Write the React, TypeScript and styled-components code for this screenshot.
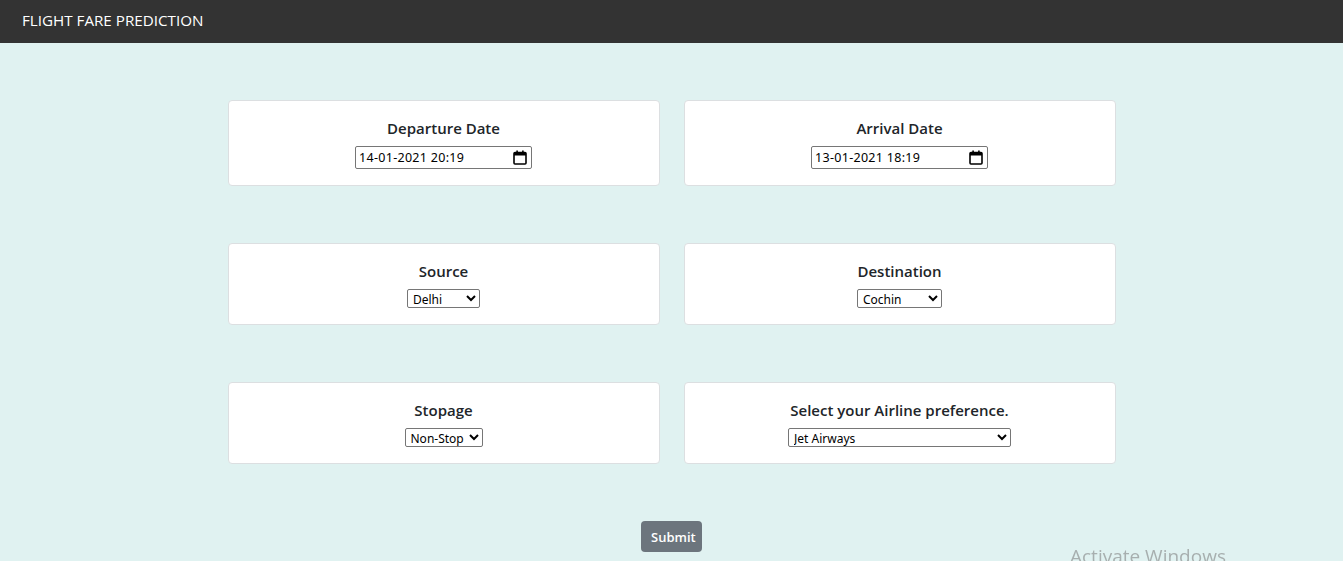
import React from "react";
import styled, { createGlobalStyle } from "styled-components";

const Global = createGlobalStyle`
  html, body { margin: 0; padding: 0; }
  body {
    background: #e0f2f1;
    font-family: "Open Sans", "Noto Sans", Arial, sans-serif;
    color: #212529;
    overflow: hidden;
  }
`;

const Page = styled.div`
  min-height: 561px;
  background: #e0f2f1;
`;

const NavBar = styled.header`
  height: 43px;
  background: #333333;
  display: flex;
  align-items: center;
  padding: 0 22px 3px;
  box-sizing: border-box;
`;

const Brand = styled.span`
  color: #ffffff;
  font-size: 15.2px;
`;

const Main = styled.main`
  display: flex;
  flex-direction: column;
  align-items: center;
  padding-top: 57px;
  gap: 57px;
`;

const Grid = styled.div`
  display: grid;
  grid-template-columns: 432px 432px;
  column-gap: 24px;
  row-gap: 57px;
`;

const Card = styled.section`
  background: #ffffff;
  border: 1px solid #dcdfe1;
  border-radius: 4px;
  padding: 16px;
  display: flex;
  flex-direction: column;
  align-items: center;
  gap: 7px;
`;

const Title = styled.h2`
  margin: 0;
  font-size: 15px;
  font-weight: 600;
  line-height: 22px;
  color: #212529;
`;

const DateBox = styled.div`
  width: 177px;
  height: 23px;
  box-sizing: border-box;
  border: 1px solid #767676;
  border-radius: 2px;
  display: flex;
  align-items: center;
  justify-content: space-between;
  padding: 0 4px 0 3px;
  font-family: "Noto Sans", Arial, sans-serif;
  font-size: 12.5px;
  letter-spacing: 0.3px;
  color: #000;
  background: #fff;
`;

const Select = styled.select<{ $w: number }>`
  width: ${(p) => p.$w}px;
  height: 19px;
  font-family: "Noto Sans", Arial, sans-serif;
  font-size: 12px;
  color: #000;
  border: 1px solid #767676;
  border-radius: 2px;
  background: #fff;
  padding: 0 0 0 1px;
`;

const Submit = styled.button`
  background: #6c757d;
  color: #fff;
  border: none;
  border-radius: 4px;
  font-family: "Open Sans", Arial, sans-serif;
  font-size: 13px;
  font-weight: 600;
  height: 31px;
  padding: 0 10px;
  width: 61px;
  cursor: pointer;
`;

const Watermark = styled.div`
  position: fixed;
  left: 1070px;
  top: 543px;
  font-family: "Open Sans", Arial, sans-serif;
  font-size: 19px;
  color: rgba(120, 120, 120, 0.55);
  white-space: nowrap;
  pointer-events: none;
`;

const CalendarIcon = () => (
  <svg width="14" height="15" viewBox="0 0 14 15" aria-hidden>
    <rect x="1" y="2.5" width="12" height="11.5" rx="1" fill="none" stroke="#000" strokeWidth="1.6" />
    <rect x="1" y="2.5" width="12" height="3" fill="#000" />
    <rect x="3.3" y="0.5" width="1.6" height="3" fill="#000" />
    <rect x="9.1" y="0.5" width="1.6" height="3" fill="#000" />
  </svg>
);

const DateField = ({ value }: { value: string }) => (
  <DateBox>
    <span>{value}</span>
    <CalendarIcon />
  </DateBox>
);

export default function App() {
  return (
    <Page>
      <Global />
      <NavBar>
        <Brand>FLIGHT FARE PREDICTION</Brand>
      </NavBar>
      <Main>
        <Grid>
          <Card>
            <Title>Departure Date</Title>
            <DateField value="14-01-2021 20:19" />
          </Card>
          <Card>
            <Title>Arrival Date</Title>
            <DateField value="13-01-2021 18:19" />
          </Card>
          <Card>
            <Title>Source</Title>
            <Select $w={73} defaultValue="Delhi">
              <option>Delhi</option>
              <option>Kolkata</option>
              <option>Mumbai</option>
              <option>Chennai</option>
            </Select>
          </Card>
          <Card>
            <Title>Destination</Title>
            <Select $w={85} defaultValue="Cochin">
              <option>Cochin</option>
              <option>Delhi</option>
              <option>New Delhi</option>
              <option>Hyderabad</option>
            </Select>
          </Card>
          <Card>
            <Title>Stopage</Title>
            <Select $w={78} defaultValue="Non-Stop">
              <option>Non-Stop</option>
              <option>1</option>
              <option>2</option>
            </Select>
          </Card>
          <Card>
            <Title>Select your Airline preference.</Title>
            <Select $w={223} defaultValue="Jet Airways">
              <option>Jet Airways</option>
              <option>IndiGo</option>
              <option>Air India</option>
              <option>SpiceJet</option>
            </Select>
          </Card>
        </Grid>
        <Submit type="button">Submit</Submit>
      </Main>
      <Watermark>Activate Windows</Watermark>
    </Page>
  );
}
